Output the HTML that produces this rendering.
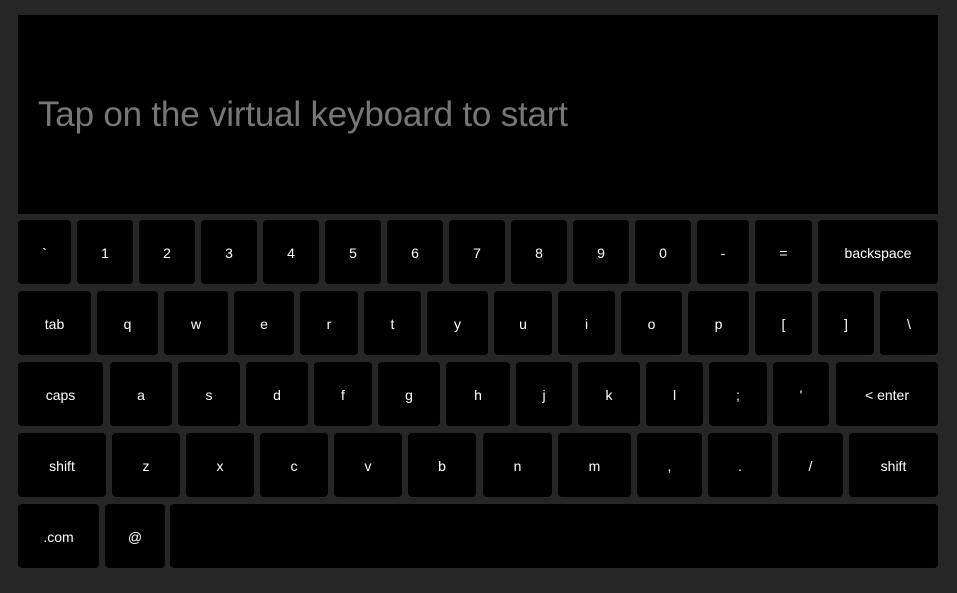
<!DOCTYPE html>
<html><head><style>
html,body{margin:0;padding:0}
body{width:957px;height:593px;background:#262626;position:relative;overflow:hidden;font-family:"Liberation Sans",sans-serif}
#t{position:absolute;left:18px;top:15px;width:920px;height:199px;background:#000}
#t span{position:absolute;left:20px;top:80px;font-size:35px;color:#777;white-space:nowrap;letter-spacing:-0.2px}
.k{position:absolute;background:#000;border-radius:4px;color:#fff;font-size:14px;display:flex;align-items:center;justify-content:center;padding-top:2px;box-sizing:border-box}
</style></head><body>
<div id="t"><span>Tap on the virtual keyboard to start</span></div>
<div id="kb"></div>
<script>
var rows=[[220,[["`",18,71],["1",77,133],["2",139,195],["3",201,257],["4",263,319],["5",325,381],["6",387,443],["7",449,505],["8",511,567],["9",573,629],["0",635,691],["-",697,749],["=",755,812],["backspace",818,938]]],
[291,[["tab",18,91],["q",97,158],["w",164,228],["e",234,294],["r",300,358],["t",364,421],["y",427,488],["u",494,552],["i",558,615],["o",621,682],["p",688,749],["[",755,812],["]",818,874],["\\",880,938]]],
[362,[["caps",18,103],["a",110,172],["s",178,240],["d",246,308],["f",314,372],["g",378,440],["h",446,510],["j",516,572],["k",578,640],["l",646,703],[";",709,767],["'",773,829],["< enter",836,938]]],
[433,[["shift",18,106],["z",112,180],["x",186,254],["c",260,328],["v",334,402],["b",408,476],["n",483,552],["m",558,631],[",",637,702],[".",708,772],["/",778,843],["shift",849,938]]],
[504,[[".com",18,99],["@",105,165],["",170,938]]]];
var h="";rows.forEach(function(r){r[1].forEach(function(k){h+='<div class="k" style="left:'+k[1]+'px;top:'+r[0]+'px;width:'+(k[2]-k[1])+'px;height:64px">'+k[0].replace(/</g,"&lt;")+'</div>';});});
document.getElementById("kb").innerHTML=h;
</script>
</body></html>
